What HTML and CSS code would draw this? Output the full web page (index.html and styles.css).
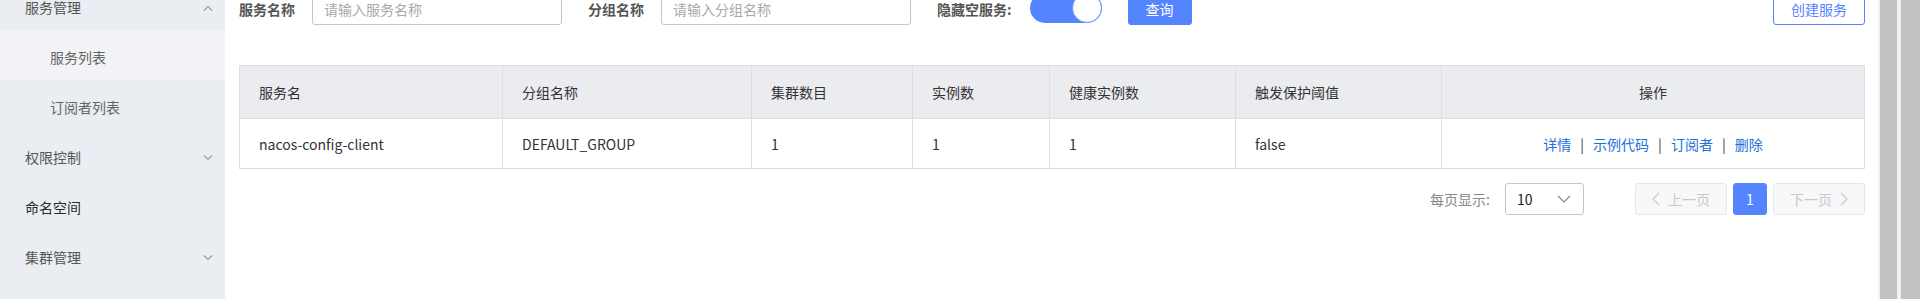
FILE: index.html
```html
<!DOCTYPE html>
<html lang="zh-CN">
<head>
    <meta charset="UTF-8">
    <meta name="viewport" content="width=device-width, initial-scale=1.0">
    <title>服务列表</title>
    <link rel="stylesheet" href="styles.css">
</head>
<body>
    <div class="layout">
        <!-- Left navigation -->
        <div class="sidebar">
            <ul class="menu">
                <li class="menu-item">
                    <span>服务管理</span>
                    <svg class="arrow" width="10" height="6" viewBox="0 0 10 6"><path d="M1 5.5 L5 1.5 L9 5.5" fill="none" stroke="#999" stroke-width="1.1"/></svg>
                </li>
                <li class="sub-item active">服务列表</li>
                <li class="sub-item">订阅者列表</li>
                <li class="menu-item">
                    <span>权限控制</span>
                    <svg class="arrow" width="10" height="6" viewBox="0 0 10 6"><path d="M1 0.5 L5 4.5 L9 0.5" fill="none" stroke="#999" stroke-width="1.1"/></svg>
                </li>
                <li class="menu-item strong">
                    <span>命名空间</span>
                </li>
                <li class="menu-item">
                    <span>集群管理</span>
                    <svg class="arrow" width="10" height="6" viewBox="0 0 10 6"><path d="M1 0.5 L5 4.5 L9 0.5" fill="none" stroke="#999" stroke-width="1.1"/></svg>
                </li>
            </ul>
        </div>

        <!-- Main content -->
        <div class="main">
            <div class="search-bar">
                <div class="form-item">
                    <label>服务名称</label>
                    <input type="text" placeholder="请输入服务名称">
                </div>
                <div class="form-item">
                    <label>分组名称</label>
                    <input type="text" placeholder="请输入分组名称">
                </div>
                <div class="form-item">
                    <label class="switch-label">隐藏空服务:</label>
                    <div class="switch"><div class="switch-knob"></div></div>
                </div>
                <button class="btn btn-primary">查询</button>
                <button class="btn btn-outline create-btn">创建服务</button>
            </div>

            <table class="service-table">
                <thead>
                    <tr>
                        <th>服务名</th>
                        <th>分组名称</th>
                        <th>集群数目</th>
                        <th>实例数</th>
                        <th>健康实例数</th>
                        <th>触发保护阈值</th>
                        <th class="ops">操作</th>
                    </tr>
                </thead>
                <tbody>
                    <tr>
                        <td>nacos-config-client</td>
                        <td>DEFAULT_GROUP</td>
                        <td>1</td>
                        <td>1</td>
                        <td>1</td>
                        <td>false</td>
                        <td class="ops">
                            <a href="#">详情</a><span class="sep">|</span><a href="#">示例代码</a><span class="sep">|</span><a href="#">订阅者</a><span class="sep">|</span><a href="#">删除</a>
                        </td>
                    </tr>
                </tbody>
            </table>

            <div class="pager">
                <span class="page-size-label">每页显示:</span>
                <div class="select">
                    <span>10</span>
                    <svg width="14" height="8" viewBox="0 0 14 8"><path d="M1 1 L7 7 L13 1" fill="none" stroke="#888" stroke-width="1.2"/></svg>
                </div>
                <div class="pages">
                    <button class="page-btn disabled">
                        <svg width="8" height="14" viewBox="0 0 8 14"><path d="M7 1 L1 7 L7 13" fill="none" stroke="#ccc" stroke-width="1.3"/></svg>
                        上一页
                    </button>
                    <button class="page-btn current">1</button>
                    <button class="page-btn disabled">
                        下一页
                        <svg width="8" height="14" viewBox="0 0 8 14"><path d="M1 1 L7 7 L1 13" fill="none" stroke="#ccc" stroke-width="1.3"/></svg>
                    </button>
                </div>
            </div>
        </div>

        <!-- scrollbars of the inner frame and the window -->
        <div class="scroll-track"><div class="scroll-thumb"></div></div>
        <div class="scroll-track outer"><div class="scroll-thumb"></div></div>
    </div>
</body>
</html>
```

FILE: styles.css
```css
/* Page */
body {
    margin: 0;
    height: 299px;
    overflow: hidden;
    font-family: "Noto Sans CJK SC", "Noto Sans", sans-serif;
    font-size: 14px;
    color: #333;
    background: #fff;
}

.layout {
    display: flex;
    height: 299px;
}

/* Sidebar */
.sidebar {
    width: 225px;
    flex-shrink: 0;
    background-color: #eaedf1;
    overflow: hidden;
}

.menu {
    list-style: none;
    margin: -20px 0 0 0;
    padding: 0;
}

.menu-item,
.sub-item {
    height: 46px;
    line-height: 46px;
    padding-top: 4px;
    color: #555;
}

.menu-item {
    display: flex;
    justify-content: space-between;
    align-items: center;
    padding-left: 25px;
    padding-right: 12px;
}

.menu-item.strong {
    color: #2a2a2a;
}

.menu-item .arrow {
    margin-top: 2px;
}

.sub-item {
    padding-left: 50px;
    color: #666;
}

.sub-item.active {
    background-color: #f2f3f7;
}

/* Main area */
.main {
    flex: 1;
    padding: 0 13px 0 14px;
    overflow: hidden;
}

.search-bar {
    display: flex;
    align-items: center;
    height: 32px;
    margin-top: -7px;
}

.form-item {
    display: flex;
    align-items: center;
    margin-right: 26px;
}

.form-item label {
    font-weight: bold;
    color: #555;
    margin-right: 17px;
}

.form-item .switch-label {
    margin-right: 18px;
}

.form-item input {
    width: 250px;
    height: 32px;
    box-sizing: border-box;
    border: 1px solid #c4c6cf;
    border-radius: 3px;
    padding: 0 11px;
    font-family: inherit;
    font-size: 14px;
    color: #333;
    outline: none;
}

.form-item input::placeholder {
    color: #a8a8a8;
}

/* Toggle */
.switch {
    width: 72px;
    height: 30px;
    border-radius: 15px;
    background-color: #5584ff;
    display: flex;
    justify-content: flex-end;
    margin-top: -2px;
}

.switch-knob {
    width: 30px;
    height: 30px;
    box-sizing: border-box;
    border-radius: 50%;
    background: #fff;
    border: 1px solid #6f97ff;
}

/* Buttons */
.btn {
    height: 32px;
    border-radius: 3px;
    font-family: inherit;
    font-size: 14px;
    cursor: pointer;
    padding: 0 17px;
}

.btn-primary {
    background-color: #5584ff;
    border: 1px solid #5584ff;
    color: #fff;
}

.btn-outline {
    background: #fff;
    border: 1px solid #5584ff;
    color: #5584ff;
}

.create-btn {
    margin-left: auto;
    width: 92px;
}

/* Table */
.service-table {
    width: 100%;
    margin-top: 40px;
    border-collapse: collapse;
    table-layout: fixed;
}

.service-table th,
.service-table td {
    border: 1px solid #dcdee3;
    text-align: left;
    padding: 0 19px;
    font-weight: normal;
    white-space: nowrap;
}

.service-table th {
    height: 52px;
    background-color: #ebecf0;
    color: #333;
}

.service-table td {
    height: 49px;
    color: #333;
}

.service-table th:nth-child(1) { width: 224px; }
.service-table th:nth-child(2) { width: 210px; }
.service-table th:nth-child(3) { width: 122px; }
.service-table th:nth-child(4) { width: 98px; }
.service-table th:nth-child(5) { width: 147px; }
.service-table th:nth-child(6) { width: 167px; }

.service-table .ops {
    text-align: center;
}

.ops a {
    color: #2270d8;
    text-decoration: none;
}

.ops .sep {
    color: #3a3a3a;
    margin: 0 9px;
}

/* Pagination */
.pager {
    display: flex;
    justify-content: flex-end;
    align-items: center;
    margin-top: 14px;
}

.page-size-label {
    color: #888;
    margin-right: 15px;
}

.select {
    width: 79px;
    height: 32px;
    box-sizing: border-box;
    border: 1px solid #c4c6cf;
    border-radius: 3px;
    display: flex;
    align-items: center;
    justify-content: space-between;
    padding: 0 12px 0 11px;
    color: #222;
}

.pages {
    display: flex;
    gap: 6px;
    margin-left: 51px;
}

.page-btn {
    height: 32px;
    box-sizing: border-box;
    border-radius: 3px;
    font-family: inherit;
    font-size: 14px;
    display: flex;
    align-items: center;
    gap: 8px;
    padding: 0 16px;
}

.page-btn.disabled {
    width: 92px;
    justify-content: center;
    background-color: #f7f8fa;
    border: 1px solid #e6e7eb;
    color: #c8c8c8;
}

.page-btn.current {
    width: 34px;
    padding: 0;
    justify-content: center;
    background-color: #5584ff;
    border: 1px solid #5584ff;
    color: #fff;
}

/* Scrollbars */
.scroll-track {
    width: 21px;
    flex-shrink: 0;
    box-sizing: border-box;
    background-color: #f1f1f1;
    padding: 0 2px;
}

.scroll-track.outer {
    padding: 0 0 0 2px;
}

.scroll-thumb {
    height: 100%;
    background-color: #c1c1c1;
}
```
